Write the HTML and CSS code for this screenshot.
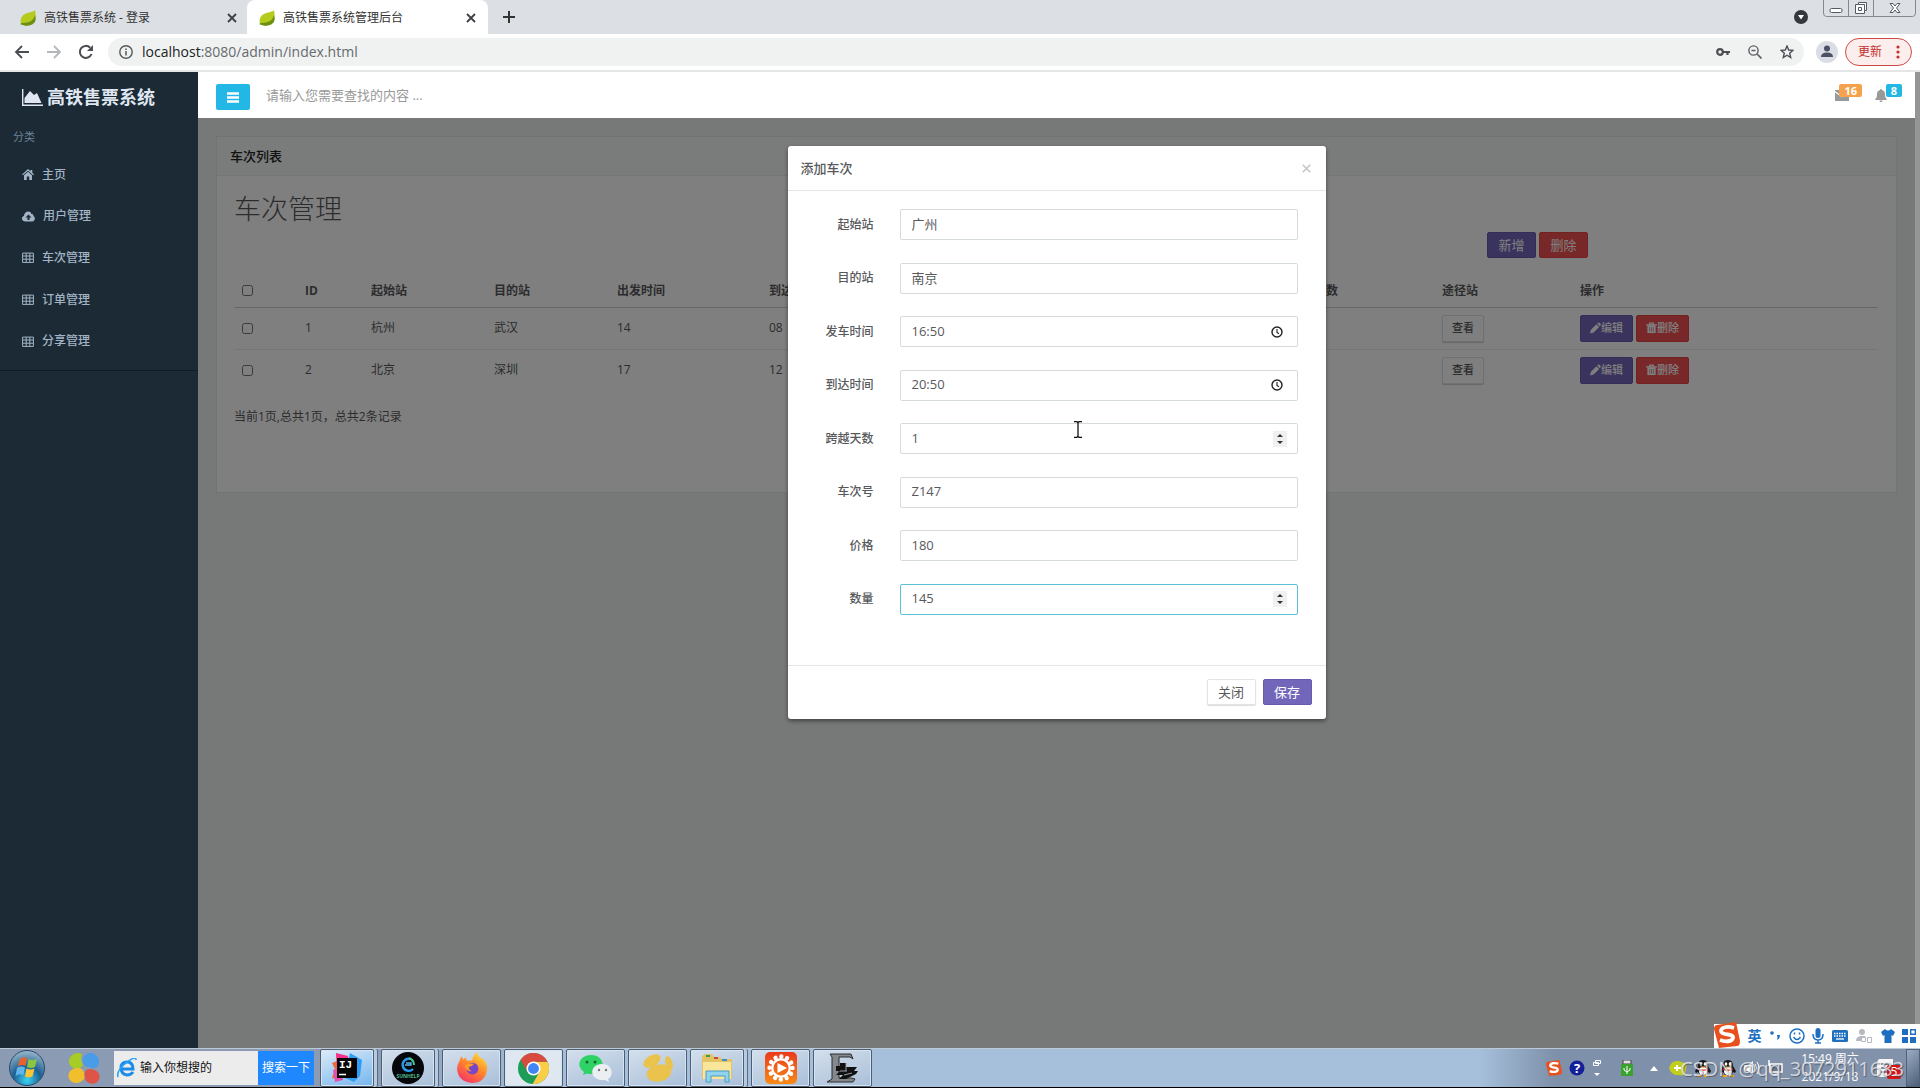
FILE: index.html
```html
<!DOCTYPE html>
<html lang="zh-CN">
<head>
<meta charset="utf-8">
<title>高铁售票系统管理后台</title>
<link rel="stylesheet" href="styles.css">
</head>
<body>
<svg class="defs" aria-hidden="true">
  <symbol id="leaf" viewBox="0 0 16 16"><path d="M15 0c-1 2-6 2-10 4-4 2-5 6-4 10 4 2 9 2 12-1s3-8 2-13z" fill="#b5cc1e"/><path d="M15 5c-1 5-5 8-13 8l-2 1c6 3 11 2 14-1 2-2 2-5 1-8z" fill="#6d8f12"/></symbol>
  <symbol id="close" viewBox="0 0 10 10"><path d="M1 1l8 8M9 1L1 9" stroke="#3c4043" stroke-width="1.8"/></symbol>
  <symbol id="table" viewBox="0 0 12 11"><path d="M.6 1.100h10.8v9.300H.6zM.6 4h10.8M.6 7.200h10.8M4.200 1.100v9.300M7.800 1.100v9.300" fill="none" stroke="currentColor" stroke-width="1"/></symbol>
  <symbol id="clock" viewBox="0 0 12 12"><circle cx="6" cy="6" r="5" fill="none" stroke="#222" stroke-width="1.4"/><path d="M6 3v3.400l2 1.400" fill="none" stroke="#222" stroke-width="1.1"/></symbol>
  <symbol id="pencil" viewBox="0 0 12 12"><path d="M0 12l1-4 6-6 3 3-6 6zM8 1l1-1c1-.5 3.500 1.500 2.500 3l-1 1z" fill="currentColor"/></symbol>
  <symbol id="trash" viewBox="0 0 12 12"><path d="M4 2V.7h4V2M0 2.500h12" fill="none" stroke="currentColor" stroke-width="1.300"/><path d="M1.500 3h9v8.500h-9z" fill="currentColor"/><path d="M4 5v5M6 5v5M8 5v5" stroke="#b04348" stroke-width=".6"/></symbol>
  <symbol id="sogou" viewBox="0 0 26 26"><path d="M3 3l19-3 4 19c0 3-1 5-3 5L5 26 0 7c0-2 1-4 3-4z" fill="#e8511d"/><path d="M20 6c-6-2-13-1-13 3 0 5 13 2 12 7-1 4-8 4-13 2" fill="none" stroke="#fff" stroke-width="3.800"/></symbol>
  <symbol id="penguin" viewBox="0 0 18 18"><path d="M9 1c4 0 5 3 5 6l3 5-1 2-2-1-2 3H6l-2-3-2 1-1-2 3-5c0-3 1-6 5-6z" fill="#17191c"/><ellipse cx="9" cy="12" rx="4" ry="4" fill="#fff"/><ellipse cx="7" cy="5" rx="1.300" ry="1.800" fill="#fff"/><ellipse cx="11" cy="5" rx="1.300" ry="1.800" fill="#fff"/><path d="M6 7.500h6L9 9z" fill="#f5a51c"/><path d="M4 9c3 2 7 2 10 0v2c-3 1-7 1-10 0z" fill="#e2231a"/><path d="M3 16h5v2H3zM10 16h5v2h-5z" fill="#f5a51c"/></symbol>
</svg>

<header class="browser">
  <div class="tabs">
    <div class="tab"><svg class="fav"><use href="#leaf"/></svg><span class="tab-title">高铁售票系统 - 登录</span><svg class="x"><use href="#close"/></svg></div>
    <div class="tab active"><svg class="fav"><use href="#leaf"/></svg><span class="tab-title">高铁售票系统管理后台</span><svg class="x"><use href="#close"/></svg></div>
    <button class="plain plus" aria-label="新标签页"><svg width="12" height="12" viewBox="0 0 12 12"><path d="M6 0v12M0 6h12" stroke="#333" stroke-width="2"/></svg></button>
    <svg class="media" width="14" height="14" viewBox="0 0 14 14"><circle cx="7" cy="7" r="7" fill="#34383d"/><path d="M4 5h6L7 9.500z" fill="#fff"/></svg>
    <svg class="winbtns" width="93" height="17" viewBox="0 0 93 17" fill="none"><path d="M.5 0v13q0 3.500 3 3.500h86q3 0 3-3.500V0M25.500 0v16M50.500 0v16" stroke="#85898e"/><rect x="7" y="8.500" width="12" height="4" rx="1.500" fill="#fff" stroke="#555a66"/><path d="M35.500 2.500h8v8h-2v3h-9v-9h3z" fill="#fff" stroke="#555a66"/><path d="M35.500 7.500h3v3h-3zM35.500 4.500h6v6" stroke="#555a66"/><path d="M67 3.500h3l2 2.500 2-2.500h3l-3.500 4.500 3.500 4.500h-3L72 10l-2 2.500h-3L70.500 8z" fill="#fff" stroke="#555a66"/></svg>
  </div>
  <div class="toolbar">
    <button class="plain tool" aria-label="后退"><svg width="16" height="14" viewBox="0 0 16 14"><path d="M15 7H2M8 1L2 7l6 6" fill="none" stroke="#4a4d51" stroke-width="1.800"/></svg></button>
    <button class="plain tool" aria-label="前进"><svg width="16" height="14" viewBox="0 0 16 14"><path d="M1 7h13M8 1l6 6-6 6" fill="none" stroke="#b5b8bb" stroke-width="1.800"/></svg></button>
    <button class="plain tool" aria-label="刷新"><svg width="16" height="16" viewBox="0 0 16 16"><path d="M13.500 10a6 6 0 1 1-1.300-6.300" fill="none" stroke="#4a4d51" stroke-width="2"/><path d="M15 1v6H9z" fill="#4a4d51"/></svg></button>
    <div class="omnibox">
      <svg width="14" height="14" viewBox="0 0 14 14"><circle cx="7" cy="7" r="6.200" fill="none" stroke="#54585c" stroke-width="1.400"/><path d="M7 6v4.500M7 3.500V5" stroke="#54585c" stroke-width="1.500"/></svg>
      <span class="url"><b>localhost</b>:8080/admin/index.html</span>
      <svg width="14" height="10" viewBox="0 0 14 10"><circle cx="4" cy="5" r="2.800" fill="none" stroke="#4b4f53" stroke-width="2.200"/><path d="M7 5h7M11.500 5v3" stroke="#4b4f53" stroke-width="2.200"/></svg>
      <svg width="14" height="14" viewBox="0 0 14 14"><circle cx="5.500" cy="5.500" r="4.600" fill="none" stroke="#5c6064" stroke-width="1.400"/><path d="M9 9l4.500 4.500M3.500 5.500h4" stroke="#5c6064" stroke-width="1.600"/></svg>
      <svg width="14" height="14" viewBox="0 0 14 14"><path d="M7 1l1.700 4 4.300.3-3.300 2.900 1 4.300L7 10.200l-3.700 2.300 1-4.300L1 5.300 5.300 5z" fill="none" stroke="#4b4f53" stroke-width="1.400"/></svg>
    </div>
    <svg width="22" height="22" viewBox="0 0 22 22"><circle cx="11" cy="11" r="11" fill="#dadde5"/><circle cx="11" cy="7.500" r="3" fill="#4b5165"/><path d="M5 16q0-4.500 6-4.500t6 4.500z" fill="#4b5165"/></svg>
    <button class="update">更新<svg width="4" height="14" viewBox="0 0 4 14"><circle cx="2" cy="2" r="1.600" fill="#c5302c"/><circle cx="2" cy="7" r="1.600" fill="#c5302c"/><circle cx="2" cy="12" r="1.600" fill="#c5302c"/></svg></button>
  </div>
</header>

<div class="app">
  <aside class="sidebar">
    <div class="brand"><svg width="21" height="17" viewBox="0 0 21 17"><path d="M.7 0v16.200H21" fill="none" stroke="currentColor" stroke-width="1.400"/><path d="M2.500 14V9L8 2l4 4 3-2 4.500 10z" fill="currentColor"/></svg>高铁售票系统</div>
    <div class="group">分类</div>
    <nav class="menu">
      <a href="#"><svg width="12" height="11" viewBox="0 0 12 11"><path d="M6 0l2.500 2.200V1h1.800v2.800L12 5.500l-.8.800L6 1.800.8 6.300 0 5.500z" fill="currentColor"/><path d="M6 2.800l4 3.500V11H7.200V7.500H4.800V11H2V6.300z" fill="currentColor"/></svg>主页</a>
      <a href="#"><svg width="13" height="11" viewBox="0 0 13 11"><path fill-rule="evenodd" d="M3.500 10.500C-1 10.500-1 5.500 2 5 2 0 8.500-1 9.500 3c2 0 2 1 1.800 2 2.500 1 2 5.500-1.300 5.500zM5.500 9h2V6.500h2L6.500 3.500l-3 3h2z" fill="currentColor"/></svg>用户管理</a>
      <a href="#"><svg width="12" height="11"><use href="#table"/></svg>车次管理</a>
      <a href="#"><svg width="12" height="11"><use href="#table"/></svg>订单管理</a>
      <a href="#"><svg width="12" height="11"><use href="#table"/></svg>分享管理</a>
    </nav>
  </aside>
  <div class="main">
    <div class="topbar">
      <button class="burger" aria-label="菜单"><svg width="12" height="11" viewBox="0 0 12 11"><path d="M0 1.500h12M0 5.500h12M0 9.500h12" stroke="#fff" stroke-width="2.400"/></svg></button>
      <input class="search" type="text" aria-label="搜索" placeholder="请输入您需要查找的内容 ...">
      <a class="notice mail" href="#"><svg width="14" height="11" viewBox="0 0 14 11"><path d="M0 0h14v1L7 6 0 1z" fill="#999"/><path d="M0 2.500l7 5 7-5V11H0z" fill="#999"/></svg><span class="badge">16</span></a>
      <a class="notice bell" href="#"><svg width="12" height="13" viewBox="0 0 12 13"><path d="M6 0c1 0 1 1 1 1 3 1 3 3 3 5 0 3 2 4 2 5H0c0-1 2-2 2-5 0-2 0-4 3-5 0 0 0-1 1-1zM4.500 11.500h3c0 2-3 2-3 0z" fill="#999"/></svg><span class="badge">8</span></a>
    </div>
    <div class="content">
      <section class="panel">
        <h2>车次列表</h2>
        <div class="panel-body">
          <h1>车次管理</h1>
          <div class="actions"><button class="btn primary">新增</button><button class="btn danger">删除</button></div>
          <table>
            <colgroup><col class="c-tick"><col class="c-id"><col class="c-st"><col class="c-st"><col class="c-time"><col class="c-time"><col class="c-st"><col class="c-st"><col class="c-st"><col class="c-time"><col class="c-via"><col></colgroup>
            <thead><tr><th><input type="checkbox" aria-label="全选"></th><th>ID</th><th>起始站</th><th>目的站</th><th>出发时间</th><th>到达时间</th><th>跨越天数</th><th>车次号</th><th>价格</th><th>剩余票数</th><th>途径站</th><th>操作</th></tr></thead>
            <tbody>
              <tr><td><input type="checkbox" aria-label="选择 1"></td><td>1</td><td>杭州</td><td>武汉</td><td>14</td><td>08</td><td></td><td></td><td></td><td></td><td><button class="btn small view">查看</button></td><td><div class="ops"><button class="btn small primary"><svg><use href="#pencil"/></svg>编辑</button><button class="btn small danger"><svg><use href="#trash"/></svg>删除</button></div></td></tr>
              <tr><td><input type="checkbox" aria-label="选择 2"></td><td>2</td><td>北京</td><td>深圳</td><td>17</td><td>12</td><td></td><td></td><td></td><td></td><td><button class="btn small view">查看</button></td><td><div class="ops"><button class="btn small primary"><svg><use href="#pencil"/></svg>编辑</button><button class="btn small danger"><svg><use href="#trash"/></svg>删除</button></div></td></tr>
            </tbody>
          </table>
          <p class="summary">当前1页,总共1页，总共2条记录</p>
        </div>
      </section>
      <div class="backdrop">
        <form class="modal" role="dialog" aria-labelledby="dlg-title">
          <div class="modal-head"><span id="dlg-title">添加车次</span><button type="button" class="plain" aria-label="关闭窗口"><svg width="9" height="9" viewBox="0 0 9 9"><path d="M.7.7l7.600 7.600M8.300.7L.7 8.300" stroke="#c4c6c7" stroke-width="1.600"/></svg></button></div>
          <div class="fields">
            <div class="field"><label for="f1">起始站</label><input id="f1" type="text" value="广州"></div>
            <div class="field"><label for="f2">目的站</label><input id="f2" type="text" value="南京"></div>
            <div class="field timed"><label for="f3">发车时间</label><input id="f3" type="text" value="16:50"><svg><use href="#clock"/></svg></div>
            <div class="field timed"><label for="f4">到达时间</label><input id="f4" type="text" value="20:50"><svg><use href="#clock"/></svg></div>
            <div class="field stepped"><label for="f5">跨越天数</label><input id="f5" type="number" value="1"><span class="steps"></span></div>
            <div class="field"><label for="f6">车次号</label><input id="f6" type="text" value="Z147"></div>
            <div class="field"><label for="f7">价格</label><input id="f7" type="text" value="180"></div>
            <div class="field stepped"><label for="f8">数量</label><input id="f8" class="current" type="number" value="145"><span class="steps"></span></div>
          </div>
          <div class="modal-foot"><button type="button" class="btn cancel">关闭</button><button type="button" class="btn primary">保存</button></div>
          <svg class="ibeam" width="8" height="17" viewBox="0 0 8 17"><path d="M0 .7h3l1 1 1-1h3M0 16.300h3l1-1 1 1h3M4 1.500v14" fill="none" stroke="#111" stroke-width="1.300"/></svg>
        </form>
      </div>
      <div class="ime">
        <svg class="ime-logo" width="26" height="26"><use href="#sogou"/></svg>
        <span>英</span>
        <svg width="12" height="14" viewBox="0 0 12 14"><circle cx="3" cy="4" r="1.800" fill="#1e6fc0"/><path d="M8 6h3q0 4-3 5 1-2 0-5z" fill="#1e6fc0"/></svg>
        <svg width="16" height="16" viewBox="0 0 16 16"><circle cx="8" cy="8" r="7" fill="none" stroke="#1e6fc0" stroke-width="1.500"/><path d="M5.500 4.500v2M10.500 4.500v2M4.500 9q3.500 5 7 0" fill="none" stroke="#1e6fc0" stroke-width="1.500"/></svg>
        <svg width="12" height="16" viewBox="0 0 12 16"><rect x="3.500" y="0" width="5" height="10" rx="2.500" fill="#1e6fc0"/><path d="M1 6q0 6 5 6t5-6M6 12v3M3 15h6" fill="none" stroke="#1e6fc0" stroke-width="1.500"/></svg>
        <svg width="16" height="12" viewBox="0 0 16 12"><rect width="16" height="12" rx="1.500" fill="#1e6fc0"/><path d="M2 3.500h12M2 6h12" stroke="#fff" stroke-width="1.300" stroke-dasharray="1.500 1"/><path d="M4 9h8" stroke="#fff" stroke-width="1.300"/></svg>
        <svg width="18" height="16" viewBox="0 0 18 16"><circle cx="7" cy="4" r="3" fill="#b5bac0"/><path d="M1 13q0-5 6-5h3v5z" fill="#b5bac0"/><path d="M6.500 9.500h4v4h-4zM12.500 9.500h4v5h-4z" fill="#fff" stroke="#b5bac0"/></svg>
        <svg width="14" height="14" viewBox="0 0 14 14"><path d="M4 0q3 3 6 0l4 3-2 4-1.500-1v8h-7V6L2 7 0 3z" fill="#1e6fc0"/></svg>
        <svg width="14" height="14" viewBox="0 0 14 14"><path d="M0 0h6v6H0zM0 8h6v6H0zM8 8h6v6H8z" fill="#1e6fc0"/><path d="M8.700.7h4.600v4.600H8.700z" fill="none" stroke="#1e6fc0" stroke-width="1.400"/></svg>
      </div>
    </div>
  </div>
  <div class="scrollbar"></div>
</div>

<footer class="taskbar">
  <svg class="orb" width="36" height="36" viewBox="0 0 36 36"><defs><radialGradient id="og" cx=".5" cy=".85" r=".8"><stop offset="0" stop-color="#39d3f2"/><stop offset=".5" stop-color="#1b5f94"/><stop offset="1" stop-color="#8fb0c6"/></radialGradient></defs><circle cx="18" cy="18" r="17.500" fill="url(#og)" stroke="#2b4965"/><path d="M11 9q4-3 7-1l-1.500 8q-4-2-8 .500z" fill="#e8622c"/><path d="M19.500 9q4 2 8.500 0l-2 8q-4 2-8 0z" fill="#8cc540"/><path d="M8 18q4-2.500 8-.5l-1.800 8Q10.500 23 6.500 26z" fill="#62b5ea"/><path d="M17.500 18.500q4 2 8 0l-2 8q-4 2-7.500 0z" fill="#fbc534"/></svg>
  <svg class="petals" width="32" height="32" viewBox="0 0 32 32"><path d="M14 2Q12 9 15 13q-4 6-10 3Q-2 11 3 4 8-1 14 2z" fill="#a6cc27"/><path d="M17 14Q12 8 17 3q6-5 12 1 5 8-2 12-3 1-6-1z" fill="#4a9be8"/><path d="M14 17q4 5 2 10-5 6-12 3-6-5-2-11 5-5 12-2z" fill="#f2bf2c"/><path d="M18 18q6-3 12 2 4 6-2 11-6 2-10-2-3-6 0-11z" fill="#de5548"/></svg>
  <form class="web-search"><svg width="20" height="20" viewBox="0 0 20 20"><path d="M16 14q-2 3-6 3-6-1-6-7t6-6q6 0 6 7H5" fill="none" stroke="#1c8ce8" stroke-width="3"/><path d="M1 19Q-1 13 9 5t10-3" fill="none" stroke="#2aa4f4" stroke-width="1.600"/></svg><input type="text" aria-label="网页搜索" value="输入你想搜的"><button type="button">搜索一下</button></form>
  <div class="tasks">
    <button class="task stack glow" aria-label="IntelliJ IDEA"><svg width="32" height="32" viewBox="0 0 32 32"><path d="M5 1l10 6-6 20L1 26l3-9-3-6 5-2z" fill="#f06a3c"/><path d="M5 1l12 3 1 10-12 3z" fill="#f5318e"/><path d="M19 1l12 7-2 16-6 6-9-4z" fill="#2e9ef7"/><path d="M2 18l8-2 2 12-8 2z" fill="#e64fb0"/><rect x="6" y="6" width="20" height="20" fill="#050505"/><text x="8" y="16" class="ij">IJ</text><path d="M8 22.500h7" stroke="#fff" stroke-width="1.500"/></svg></button>
    <button class="task stack" aria-label="SunHelp"><svg width="32" height="32" viewBox="0 0 32 32"><circle cx="16" cy="16" r="16" fill="#05070b"/><path d="M18 7a6 6 0 1 0 3 10" fill="none" stroke="#2d9bea" stroke-width="2.400"/><path d="M17 6q5 2 5 7" fill="none" stroke="#45c48f" stroke-width="2"/><path d="M13 13h6v-2h-5" fill="none" stroke="#57b8f2" stroke-width="1.300"/><text x="16" y="26" class="sun">SUNHELP</text></svg></button>
    <button class="task" aria-label="Firefox"><svg width="32" height="32" viewBox="0 0 30 30"><defs><linearGradient id="fx" x1=".8" y1="0" x2=".2" y2="1"><stop offset="0" stop-color="#ffe03d"/><stop offset=".45" stop-color="#ff8a2a"/><stop offset="1" stop-color="#f5306a"/></linearGradient></defs><path d="M3 9l2-5 2 3 2-2 1 3 5 0q1-5 5-8 0 4 4 6l2 1q4 5 3 10-2 12-14 12Q2 28 1 16q0-4 2-7z" fill="url(#fx)"/><circle cx="15.500" cy="15.500" r="5.500" fill="#7b45c8"/><path d="M8 13q3-3 9-2-2 3-5 3 0 3 3 4-5 1-7-5z" fill="#ff9b22"/></svg></button>
    <button class="task bright" aria-label="Chrome"><svg width="31" height="31" viewBox="0 0 30 30"><circle cx="15" cy="15" r="15" fill="#1d9d58"/><path d="M15 8.400h13.500A15 15 0 0 1 14.200 30l6.500-11.700z" fill="#fccd46"/><path d="M28.500 8.400H15l-5.700 9.900L2.500 6.700a15 15 0 0 1 26 1.700z" fill="#d84c3f"/><circle cx="15" cy="15" r="6.800" fill="#fff"/><circle cx="15" cy="15" r="5.300" fill="#4285f4"/></svg></button>
    <button class="task" aria-label="微信"><svg width="34" height="28" viewBox="0 0 34 28"><path d="M12 1c15 0 16 19 0 19-2 0-3 0-4-.5L4 21l1-3C-4 12 1 1 12 1z" fill="#2fd264"/><circle cx="8" cy="8" r="1.500" fill="#18632f"/><circle cx="16" cy="8" r="1.500" fill="#18632f"/><path d="M23 10c11 0 12 12 6 15l1 3-4-2c-17 1-16-16-3-16z" fill="#eceff1"/><circle cx="20" cy="16" r="1.200" fill="#777"/><circle cx="27" cy="16" r="1.200" fill="#777"/></svg></button>
    <button class="task" aria-label="应用"><svg width="32" height="30" viewBox="0 0 32 30"><g fill="#e9c34b"><ellipse cx="10" cy="8" rx="9.500" ry="5.500" transform="rotate(-32 10 8)"/><ellipse cx="27" cy="10" rx="3.500" ry="7" transform="rotate(-18 27 10)"/><ellipse cx="17" cy="20" rx="12.500" ry="8.500" transform="rotate(-12 17 20)"/></g></svg></button>
    <button class="task stack" aria-label="文件夹"><svg width="32" height="30" viewBox="0 0 32 30"><path d="M1 3L4 1h7l2 3h6l2 2h10v20H1z" fill="#e2c365"/><path d="M2 9h28v17H2z" fill="#fae69a"/><path d="M5 3h4" stroke="#3c9e4b" stroke-width="2"/><path d="M13 5h4" stroke="#c74a3c" stroke-width="2"/><path d="M21 7h5" stroke="#3d8fc9" stroke-width="2"/><path d="M5 29V18h23v11h-4v-6H10v6z" fill="#8fd3ee" stroke="#4b9bc4"/></svg></button>
    <button class="task" aria-label="视频"><svg width="32" height="32" viewBox="0 0 32 32"><defs><linearGradient id="vd" x2="0" y2="1"><stop offset="0" stop-color="#ea3a1c"/><stop offset="1" stop-color="#f98a16"/></linearGradient></defs><rect width="32" height="32" rx="5" fill="url(#vd)"/><circle cx="16" cy="16" r="11.500" fill="none" stroke="#fff" stroke-width="4.400" stroke-linecap="round" stroke-dasharray=".02 6"/><circle cx="16" cy="16" r="8.800" fill="none" stroke="#fff" stroke-width="2.400"/><path d="M12.500 11l9.500 5-9.500 5z" fill="#fff"/></svg></button>
    <button class="task" aria-label="编辑器"><svg width="32" height="30" viewBox="0 0 32 30"><path d="M3 1h21l2 5-3-2H12v21h12l4 1-2 3H0l5-3V4z" fill="#85898d" stroke="#2a2c2e"/><path d="M9 13h4v-3h6v4h11l-3 4h4l-2 3-10 5h-7l4-4H9l4-4H9z" fill="#111"/><path d="M13 18h7M17 22l8-2M19 10v8" stroke="#9aa0a5" stroke-width="1"/></svg></button>
  </div>
  <div class="tray">
    <svg width="16" height="16"><use href="#sogou"/></svg>
    <svg width="16" height="16" viewBox="0 0 16 16"><circle cx="8" cy="8" r="7.500" fill="#14209a"/><text x="8" y="13" class="q">?</text></svg>
    <svg width="10" height="18" viewBox="0 0 10 18"><path d="M3.500 1.500h5v3h-5zM1.500 3.500h5v3h-5z" fill="none" stroke="#fff"/><path d="M2 14h6l-3 3z" fill="#fff"/></svg>
    <svg class="usb" width="12" height="16" viewBox="0 0 12 16"><path d="M2 0h8v4H2z" fill="#ddd" stroke="#444"/><rect y="4" width="12" height="12" rx="1" fill="#3aa12d"/><path d="M6 6v8M3 8v2l3 2 3-2V8" fill="none" stroke="#fff"/></svg>
    <svg width="8" height="5" viewBox="0 0 8 5"><path d="M0 5l4-5 4 5z" fill="#fff"/></svg>
    <svg class="guard" width="18" height="16" viewBox="0 0 18 16"><path d="M0 8q2-8 10-7l8 3-2 11q-14 2-16-7z" fill="#c3ce1b"/><path d="M8 5v6M5 8h7" stroke="#fff" stroke-width="2"/></svg>
    <svg width="18" height="18"><use href="#penguin"/></svg>
    <svg width="18" height="18"><use href="#penguin"/></svg>
    <svg width="16" height="16" viewBox="0 0 16 16"><path d="M0 5h4l5-4v14l-5-4H0z" fill="#fff"/><path d="M11 4q3 4 0 8M13 2q4 6 0 12" fill="none" stroke="#fff"/></svg>
    <svg width="16" height="16" viewBox="0 0 16 16"><path d="M3 4h12v8H3zM6 15h6M2 0v6" fill="#68778b" stroke="#fff" stroke-width="1.500"/></svg>
    <div class="time"><span>15:49 周六</span><span>2021/9/18</span></div>
    <div class="notes"><svg width="18" height="18" viewBox="0 0 18 18"><path d="M2 0h14v18H0V3z" fill="#f6f6f6"/><path d="M4 5h9M4 9h9M4 13h9" stroke="#667" stroke-width="1.500"/></svg><span>5</span></div>
    <div class="peek"></div>
  </div>
  <div class="watermark">CSDN @qq_3072911683</div>
</footer>
</body>
</html>
```
FILE: styles.css
```css
* { box-sizing: border-box; }
body { margin: 0; min-height: 100vh; display: flex; flex-direction: column; font: 12px/18px "Open Sans", "Noto Sans CJK SC", sans-serif; color: #58595b; background: #fff; }
button, input { font: inherit; color: inherit; margin: 0; }
svg { flex: none; display: block; }
a { color: inherit; text-decoration: none; }
.defs { position: absolute; width: 0; height: 0; }
.plain { border: 0; background: none; padding: 0; display: flex; align-items: center; justify-content: center; }

/* browser frame */
.tabs { height: 34px; background: #dcdfe4; display: flex; align-items: center; color: #333; }
.tab { width: 247px; height: 34px; display: flex; align-items: center; gap: 8px; padding: 1px 10px 0 20px; }
.tab.active { width: 241px; background: #fff; border-radius: 8px 8px 0 0; padding: 1px 12px 0 12px; }
.fav { width: 16px; height: 16px; }
.x { width: 10px; height: 10px; }
.tab-title { flex: 1; }
.plus { width: 42px; height: 28px; }
.media { margin-left: auto; margin-right: 15px; }
.winbtns { align-self: flex-start; margin-right: 4px; }
.toolbar { height: 38px; border-bottom: 2px solid #e3e5e6; display: flex; align-items: center; padding: 0 8px 0 6px; }
.tool { width: 32px; height: 28px; }
.omnibox { flex: 1; height: 28px; margin: 0 12px 0 6px; padding: 0 10px 0 11px; border-radius: 14px; background: #f0f2f2; display: flex; align-items: center; gap: 18px; }
.url { flex: 1; margin-left: -9px; font-size: 14px; color: #666a6e; }
.url b { font-weight: 400; color: #202124; }
.update { margin-left: 7px; width: 67px; height: 28px; border: 1px solid #cf4a45; border-radius: 14px; background: #fbeeed; color: #c5302c; display: flex; align-items: center; gap: 14px; padding: 0 0 0 12px; }

/* application */
.app { flex: 1; display: flex; }
.sidebar { width: 198px; background: #1b2a34; color: #a3b4c5; flex: none; }
.brand { height: 50px; padding-left: 22px; display: flex; align-items: center; gap: 4px; font-size: 18px; font-weight: 700; color: #dfe6f2; }
.group { padding: 6px 13px; font-size: 11px; line-height: 18px; color: #6f8497; }
.menu { height: 217px; padding-bottom: 8px; margin-top: 2px; display: grid; border-bottom: 1px solid #101c24; font-weight: 500; }
.menu a { display: flex; align-items: center; gap: 8px; padding-left: 22px; }
.main { flex: 1; min-width: 0; display: flex; flex-direction: column; }
.topbar { height: 46px; padding: 0 13px 0 18px; display: flex; align-items: center; background: #fff; }
.burger { width: 34px; height: 26px; margin-top: 4px; border: 0; border-radius: 2px; background: #23b7e5; padding: 0; display: flex; align-items: center; justify-content: center; }
.search { flex: 1; margin: 0 0 0 16px; border: 0; padding: 0; outline: 0; font-size: 13px; }
.search::placeholder { color: #999; }
.notice { display: flex; align-items: center; position: relative; width: 27px; height: 20px; }
.mail { margin-right: 13px; }
.badge { position: absolute; top: -1px; right: 0; height: 13px; padding: 0 5px; border-radius: 2px; color: #fff; background: #f6a24c; font-size: 11px; line-height: 13px; font-weight: 700; }
.bell .badge { background: #23b7e5; }
.scrollbar { width: 5px; background: #949694; flex: none; }
.content { flex: 1; position: relative; background: #eef1f0; padding: 18px 18px 20px; }
.panel { background: #fff; border: 1px solid #e4e8e8; }
.panel h2 { margin: 0; height: 39px; padding: 0 13px; background: #f4f7f6; border-bottom: 1px solid #e8ecec; font-size: 13px; line-height: 38px; font-weight: 500; color: #222; }
.panel-body { padding: 16px 18px 0 17px; height: 316px; }
.panel h1 { margin: 0; font-size: 27px; line-height: 34px; font-weight: 300; }
.actions { display: flex; justify-content: flex-end; gap: 3px; padding: 6px 290px 0 0; }
.btn { height: 26px; min-width: 49px; border: 1px solid transparent; border-radius: 2px; padding: 0; font-size: 13px; line-height: 20px; display: flex; align-items: center; justify-content: center; }
.primary { background: #7266ba; border-color: #675baf; color: #fff; }
.danger { background: #f05050; border-color: #e64545; color: #fff; }
.small { height: 27px; min-width: 53px; font-size: 11px; font-weight: 500; }
.small svg { width: 11px; height: 12px; }
.view { min-width: 42px; border-color: #dde3e5; box-shadow: 0 1px 1px #ccc; background: #fff; }
.ops { display: flex; gap: 3px; }
table { width: 100%; table-layout: fixed; border-collapse: collapse; margin-top: 17px; }
th, td { padding: 0 8px; text-align: left; }
th { height: 32px; border-bottom: 1px solid #c9cdce; font-weight: 700; }
td { height: 42px; border-bottom: 1px solid #e9ecec; }
tbody tr:last-child td { border: 0; }
td input, th input { display: block; width: 11px; height: 11px; }
.c-tick { width: 63px; }
.c-id { width: 66px; }
.c-st { width: 123px; }
.c-time { width: 152px; }
.c-via { width: 138px; }
.summary { margin: 17px 0 0; }

/* dialog */
.backdrop { position: absolute; inset: 0; background: rgba(0, 0, 0, .5); padding-top: 28px; }
.modal { position: relative; width: 538px; margin: 0 auto; background: #fff; border-radius: 3px; box-shadow: 0 2px 4px rgba(0, 0, 0, .45); }
.modal-head { height: 45px; padding: 0 15px 0 13px; display: flex; align-items: center; justify-content: space-between; border-bottom: 1px solid #e5e5e5; font-size: 13px; font-weight: 500; }
.fields { height: 474px; padding: 18px 28px 50px 20px; display: flex; flex-direction: column; justify-content: space-between; }
.field { display: flex; align-items: center; position: relative; }
.field label { width: 66px; text-align: right; font-weight: 500; }
.field input { flex: 1; min-width: 0; height: 31px; margin-left: 26px; padding: 3px 11px 5px; border: 1px solid #d5dadb; border-radius: 2px; outline: 0; background: #fff; font-size: 13px; }
.field .current { border-color: #5bc0d8; }
.field input[type="number"] { appearance: textfield; }
.timed svg { position: absolute; right: 15px; width: 12px; height: 12px; }
.steps { position: absolute; right: 11px; width: 14px; height: 16px; background: #f0f0f0; display: grid; place-content: center; gap: 4px; pointer-events: none; }
.steps::before, .steps::after { content: ""; border: 3px solid transparent; border-top: 0; border-bottom: 3px solid #333; }
.steps::after { border-bottom: 0; border-top: 3px solid #333; }
.modal-foot { height: 54px; padding: 0 14px 2px; border-top: 1px solid #e5e5e5; display: flex; align-items: center; justify-content: flex-end; gap: 7px; }
.cancel { background: #fff; border-color: #e0e4e5; box-shadow: 0 1px 1px #ddd; }
.ibeam { position: absolute; left: 286px; top: 275px; }

/* input method bar */
.ime { position: absolute; right: -5px; bottom: 0; height: 24px; width: 206px; padding: 0 4px 0 0; background: #fff; display: flex; align-items: center; justify-content: space-between; color: #1e6fc0; font-size: 14px; font-weight: 700; z-index: 2; }
.ime-logo { margin: -2px 0 0 0; }

/* desktop taskbar */
.taskbar { height: 40px; position: relative; display: flex; align-items: center; background: linear-gradient(90deg, #8a9bb3 0, #8a9bb3 18%, #a6c0dc 30%, #a6c0dc 77%, #7e90aa 81%, #8292aa 100%); border-top: 1px solid #bdc9d6; border-bottom: 1px solid #000; }
.orb { margin-left: 9px; }
.petals { margin-left: 23px; }
.web-search { margin: 0 6px 0 14px; width: 200px; height: 34px; background: #ececec; display: flex; align-items: center; padding-left: 3px; color: #111; }
.web-search input { flex: 1; min-width: 0; border: 0; padding: 0 0 0 3px; background: none; outline: 0; }
.web-search button { align-self: stretch; width: 56px; padding: 0; border: 0; background: #2088ff; color: #fff; }
.tasks { display: flex; gap: 3px; align-self: stretch; }
.task { width: 59px; padding: 0; border: 1px solid #4d5d72; border-radius: 2px; background: linear-gradient(160deg, #d3dfec, #a9bfd9); box-shadow: inset 0 0 0 1px #d6e4f2; display: flex; align-items: center; justify-content: center; }
.stack { width: 54px; margin-right: 4px; box-shadow: inset 0 0 0 1px #d6e4f2, 3px 0 0 #b6cbe2, 4px 0 0 #5a6a80; }
.glow { background: linear-gradient(160deg, #dcebf8, #74b5ee); }
.bright { background: #dfe7f1; }
.ij { font: 700 11px "Liberation Mono", monospace; fill: #fff; }
.sun { font: 700 5px "Open Sans", sans-serif; fill: #52b98c; text-anchor: middle; }
.q { font: 700 13px "Open Sans", sans-serif; fill: #fff; text-anchor: middle; }
.tray { margin-left: auto; display: flex; align-items: center; align-self: stretch; gap: 7px; color: #fff; }
.usb { margin: 0 10px 0 12px; }
.guard { margin-left: 4px; }
.time { width: 80px; display: flex; flex-direction: column; line-height: 18px; text-align: center; }
.notes { position: relative; width: 22px; }
.notes span { position: absolute; right: -2px; top: 6px; width: 14px; height: 14px; border-radius: 2px; background: #d91414; line-height: 14px; text-align: center; }
.peek { width: 14px; align-self: stretch; border: 1px solid #51617a; background: linear-gradient(135deg, #9aabc2, #4d6078); }
.watermark { position: absolute; right: 16px; top: 8px; font: 20px/24px "Open Sans", sans-serif; color: rgba(235, 238, 242, .8); text-shadow: 1px 1px 1px rgba(50, 60, 75, .6); white-space: nowrap; }
```
